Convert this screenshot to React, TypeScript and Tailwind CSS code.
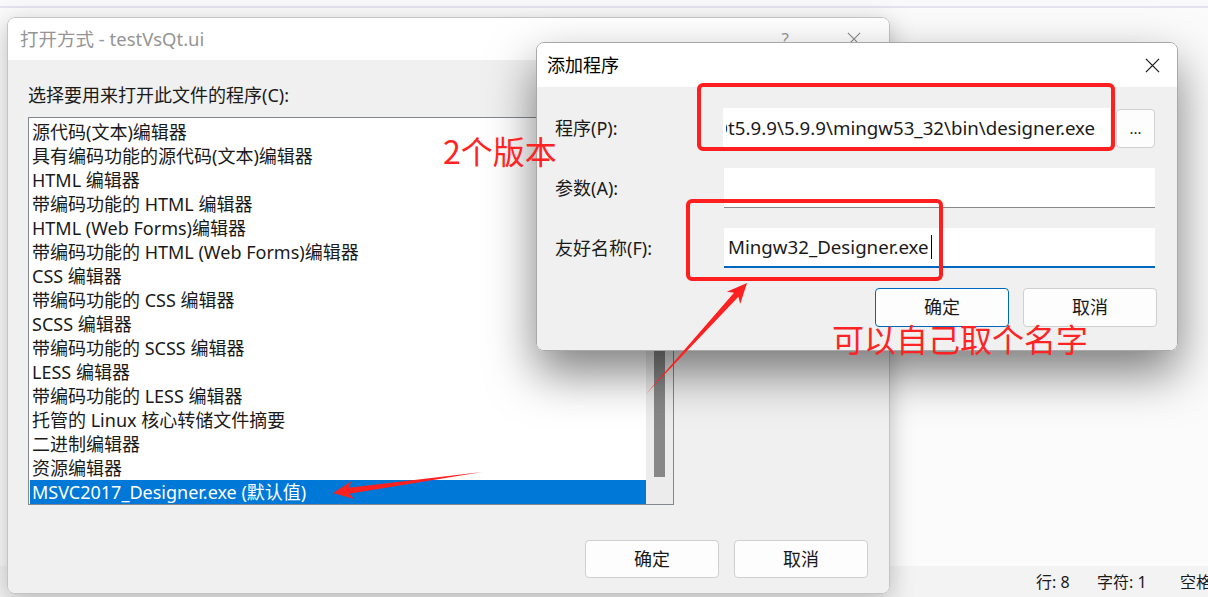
import React from "react";

const items = [
  "源代码(文本)编辑器",
  "具有编码功能的源代码(文本)编辑器",
  "HTML 编辑器",
  "带编码功能的 HTML 编辑器",
  "HTML (Web Forms)编辑器",
  "带编码功能的 HTML (Web Forms)编辑器",
  "CSS 编辑器",
  "带编码功能的 CSS 编辑器",
  "SCSS 编辑器",
  "带编码功能的 SCSS 编辑器",
  "LESS 编辑器",
  "带编码功能的 LESS 编辑器",
  "托管的 Linux 核心转储文件摘要",
  "二进制编辑器",
  "资源编辑器",
];

function CloseX({ color, size }: { color: string; size: number }) {
  return (
    <svg width={size} height={size} viewBox="0 0 16 16">
      <path d="M1 1 L15 15 M15 1 L1 15" stroke={color} strokeWidth="1.3" fill="none" />
    </svg>
  );
}

export default function App() {
  return (
    <div className="relative w-[1208px] h-[597px] overflow-hidden bg-white font-['Noto_Sans','Noto_Sans_CJK_SC',sans-serif] text-[#1a1a1a]">
      {/* background window */}
      <div className="flex flex-col w-full h-full">
        <div className="h-[6px] bg-[#f9f9fb]" />
        <div className="h-[2px] bg-[#e4e4ee]" />
        <div className="flex-1 bg-[#fbfbfb]" />
        <div className="h-[31px] bg-[#f3f3f3] flex items-center text-[16px] text-[#1b1b1b] whitespace-nowrap pl-[1036px] overflow-hidden">
          <span className="w-[61px] shrink-0">行: 8</span>
          <span className="w-[83px] shrink-0">字符: 1</span>
          <span className="shrink-0">空格: 4</span>
        </div>
      </div>

      {/* dialog 1 */}
      <div className="absolute left-[7px] top-[17px] w-[883px] h-[577px] flex flex-col rounded-[8px] border border-[#c4c4c4] overflow-hidden shadow-[0_6px_24px_rgba(0,0,0,0.25)]">
        <div className="h-[42px] bg-white flex items-center pl-[12px] text-[18.5px] text-[#959595]">
          <span className="flex-1">打开方式 - testVsQt.ui</span>
          <span className="text-[17px] text-[#9a9a9a] mr-[58px]">?</span>
          <span className="mr-[28px]"><CloseX color="#8a8a8a" size={14} /></span>
        </div>
        <div className="flex-1 bg-[#f0f0f0] px-[20px] pt-[23px] flex flex-col">
          <div className="text-[18px] leading-[24px] h-[24px]">选择要用来打开此文件的程序(C):</div>
          <div className="mt-[10px] w-[646px] h-[388px] border border-[#828790] bg-white flex">
            <div className="flex-1 pt-[2px] flex flex-col">
              {items.map((t) => (
                <div key={t} className="h-[24px] leading-[24px] pl-[3px] text-[18px] whitespace-nowrap">{t}</div>
              ))}
              <div className="h-[24px] leading-[24px] pl-[2px] ml-[1px] text-[18px] bg-[#0078d7] text-white whitespace-nowrap">MSVC2017_Designer.exe (默认值)</div>
            </div>
            <div className="w-[27px] bg-[#ececec] flex justify-center">
              <div className="mt-[40px] w-[11px] h-[319px] bg-[#878787]" />
            </div>
          </div>
          <div className="mt-[35px] flex justify-end gap-[15px] mr-[1px]">
            <div className="w-[134px] h-[38px] rounded-[4px] border border-[#d0d0d0] bg-[#fdfdfd] flex items-center justify-center text-[18px]">确定</div>
            <div className="w-[134px] h-[38px] rounded-[4px] border border-[#d0d0d0] bg-[#fdfdfd] flex items-center justify-center text-[18px]">取消</div>
          </div>
        </div>
      </div>

      {/* dialog 2 */}
      <div className="absolute left-[536px] top-[42px] w-[642px] h-[309px] flex flex-col rounded-[8px] border border-[#a8a8a8] overflow-hidden shadow-[0_22px_48px_rgba(0,0,0,0.5)]">
        <div className="h-[44px] bg-white flex items-center pl-[10px] text-[18px] text-black">
          <span className="flex-1">添加程序</span>
          <span className="mr-[17px]"><CloseX color="#1a1a1a" size={15} /></span>
        </div>
        <div className="flex-1 bg-[#f0f0f0] pl-[18px] pr-[22px] pt-[21px] flex flex-col text-[18px]">
          <div className="flex items-center h-[41px]">
            <div className="w-[169px]">程序(P):</div>
            <div className="w-[388px] h-[41px] bg-white flex justify-end items-center pl-[3px] pr-[15px] overflow-hidden text-[18.7px]">
              <div className="overflow-hidden flex justify-end">
                <span className="whitespace-nowrap">Qt5.9.9\5.9.9\mingw53_32\bin\designer.exe</span>
              </div>
            </div>
            <div className="ml-[6px] w-[39px] h-[39px] rounded-[4px] border border-[#d0d0d0] bg-[#fdfdfd] flex items-center justify-center text-[15px]">...</div>
          </div>
          <div className="flex items-center h-[40px] mt-[19px]">
            <div className="w-[169px]">参数(A):</div>
            <div className="flex-1 h-[40px] bg-white border-b border-[#8a8a8a]" />
          </div>
          <div className="flex items-center h-[40px] mt-[20px]">
            <div className="w-[169px]">友好名称(F):</div>
            <div className="flex-1 h-[40px] bg-white border-b-2 border-[#0067c0] flex items-center pl-[4px] text-[18.7px]">
              <span className="whitespace-nowrap">Mingw32_Designer.exe</span>
              <span className="ml-[2px] w-[1px] h-[24px] bg-black" />
            </div>
          </div>
          <div className="mt-[20px] flex justify-end gap-[14px] mr-[-2px]">
            <div className="w-[134px] h-[39px] rounded-[4px] border border-[#0067c0] bg-[#fdfdfd] flex items-center justify-center">确定</div>
            <div className="w-[134px] h-[39px] rounded-[4px] border border-[#d0d0d0] bg-[#fdfdfd] flex items-center justify-center">取消</div>
          </div>
        </div>
      </div>

      {/* annotations */}
      <div className="absolute left-[697px] top-[83px] w-[418px] h-[68px] border-[4px] border-[#ff1f1f] rounded-[6px]" />
      <div className="absolute left-[686px] top-[199px] w-[257px] h-[82px] border-[4px] border-[#ff1f1f] rounded-[6px]" />
      <div className="absolute left-[443px] top-[131px] text-[32px] leading-[38px] text-[#ff2424] font-['Noto_Sans_CJK_SC',sans-serif]">2个版本</div>
      <div className="absolute left-[832px] top-[320px] text-[32px] leading-[36px] text-[#ff2424] font-['Noto_Sans_CJK_SC',sans-serif]">可以自己取个名字</div>
      <svg className="absolute left-0 top-0 pointer-events-none" width="1208" height="597" viewBox="0 0 1208 597">
        <polygon points="646,394 738.4,296.8 740.2,303.9 747,283 726.8,291.7 734,292.8" fill="#ff2020" />
        <polygon points="482,472 348.4,487.8 351.5,481.3 333,493 354.1,499.1 349.2,493.8" fill="#ff2020" />
      </svg>
    </div>
  );
}
